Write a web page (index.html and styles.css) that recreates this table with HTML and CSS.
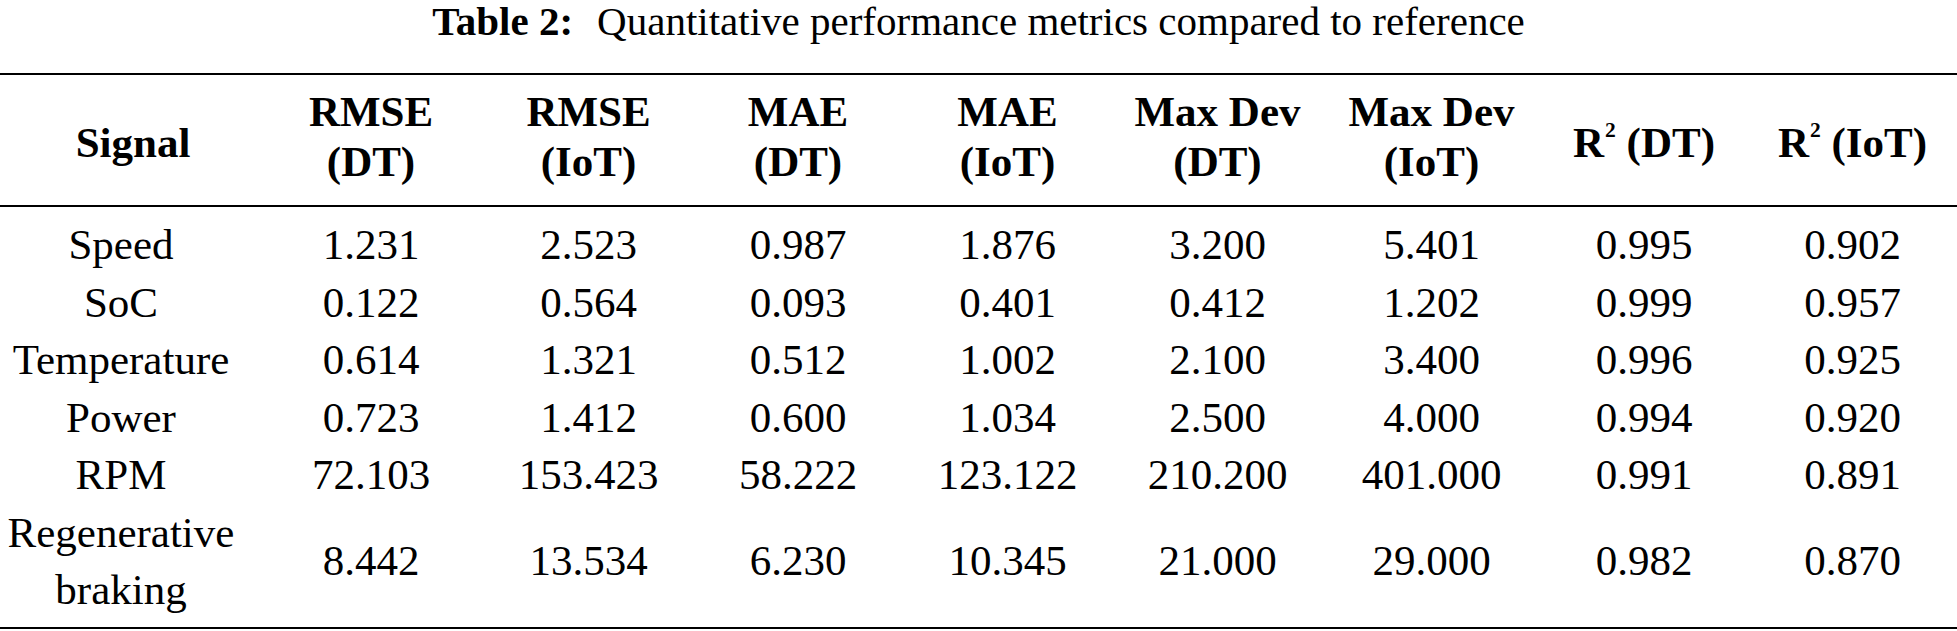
FILE: index.html
```html
<!DOCTYPE html>
<html lang="en">
<head>
<meta charset="utf-8">
<title>Table 2</title>
<link rel="stylesheet" href="styles.css">
</head>
<body>
<div class="caption"><span class="cap-label">Table 2:</span><span class="cap-text">Quantitative performance metrics compared to reference</span></div>
<table class="metrics">
  <colgroup>
    <col class="c-signal">
    <col class="c-rmse-dt">
    <col class="c-rmse-iot">
    <col class="c-mae-dt">
    <col class="c-mae-iot">
    <col class="c-max-dt">
    <col class="c-max-iot">
    <col class="c-r2-dt">
    <col class="c-r2-iot">
  </colgroup>
  <thead>
    <tr>
      <th class="single h-signal">Signal</th>
      <th>RMSE<br>(DT)</th>
      <th>RMSE<br>(IoT)</th>
      <th>MAE<br>(DT)</th>
      <th>MAE<br>(IoT)</th>
      <th>Max Dev<br>(DT)</th>
      <th>Max Dev<br>(IoT)</th>
      <th class="single">R<sup class="sq">2</sup> (DT)</th>
      <th class="single">R<sup class="sq">2</sup> (IoT)</th>
    </tr>
  </thead>
  <tbody>
    <tr class="first">
      <td class="name">Speed</td><td>1.231</td><td>2.523</td><td>0.987</td><td>1.876</td><td>3.200</td><td>5.401</td><td>0.995</td><td>0.902</td>
    </tr>
    <tr>
      <td class="name">SoC</td><td>0.122</td><td>0.564</td><td>0.093</td><td>0.401</td><td>0.412</td><td>1.202</td><td>0.999</td><td>0.957</td>
    </tr>
    <tr>
      <td class="name">Temperature</td><td>0.614</td><td>1.321</td><td>0.512</td><td>1.002</td><td>2.100</td><td>3.400</td><td>0.996</td><td>0.925</td>
    </tr>
    <tr>
      <td class="name">Power</td><td>0.723</td><td>1.412</td><td>0.600</td><td>1.034</td><td>2.500</td><td>4.000</td><td>0.994</td><td>0.920</td>
    </tr>
    <tr>
      <td class="name">RPM</td><td>72.103</td><td>153.423</td><td>58.222</td><td>123.122</td><td>210.200</td><td>401.000</td><td>0.991</td><td>0.891</td>
    </tr>
    <tr class="last">
      <td class="name">Regenerative<br>braking</td><td>8.442</td><td>13.534</td><td>6.230</td><td>10.345</td><td>21.000</td><td>29.000</td><td>0.982</td><td>0.870</td>
    </tr>
  </tbody>
</table>
</body>
</html>
```
FILE: styles.css
```css
html, body {
  margin: 0;
  padding: 0;
  background: #ffffff;
  color: #000000;
}
body {
  font-family: "Liberation Serif", "DejaVu Serif", serif;
  width: 1957px;
}
.caption {
  text-align: center;
  font-size: 41px;
  line-height: 42px;
  height: 42px;
  margin-bottom: 31px;
}
.cap-label {
  font-weight: bold;
  margin-right: 24px;
}
.metrics {
  width: 1957px;
  table-layout: fixed;
  border-collapse: collapse;
  font-size: 43px;
}
.c-signal { width: 258px; }
.c-rmse-dt { width: 226px; }
.c-rmse-iot { width: 209px; }
.c-mae-dt { width: 210px; }
.c-mae-iot { width: 209px; }
.c-max-dt { width: 211px; }
.c-max-iot { width: 217px; }
.c-r2-dt { width: 208px; }
.c-r2-iot { width: 209px; }
.metrics thead tr {
  border-top: 2px solid #000;
  border-bottom: 2px solid #000;
}
.metrics th {
  font-weight: bold;
  line-height: 50px;
  padding: 12px 0 18px 0;
  text-align: center;
  vertical-align: middle;
}
.metrics th.single {
  padding-top: 24px;
}
.metrics th.h-signal {
  padding-left: 8px;
}
.metrics td {
  line-height: 57.5px;
  padding: 0;
  text-align: center;
  vertical-align: middle;
}
.metrics td.name {
  padding-right: 16px;
}
.metrics tbody tr.first td {
  padding-top: 9px;
}
.metrics tbody tr.last {
  border-bottom: 2px solid #000;
}
.metrics tbody tr.last td {
  padding-bottom: 8px;
}
.sq {
  font-size: 0.5em;
  line-height: 0;
  vertical-align: 0.95em;
  margin-left: 1px;
}
```
